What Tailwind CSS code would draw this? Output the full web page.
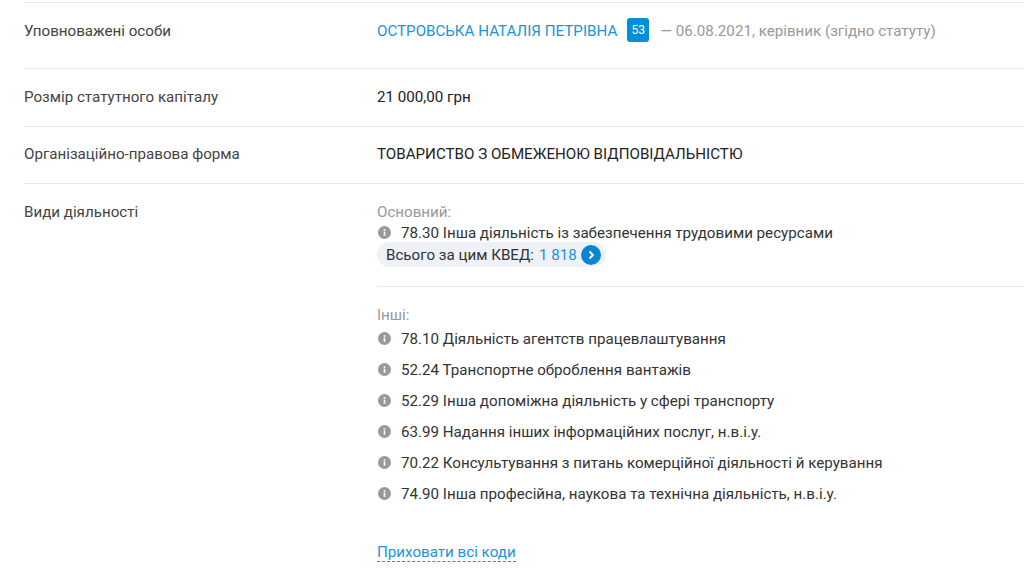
<!doctype html>
<html lang="uk">
<head>
  <meta charset="UTF-8">
  <meta name="viewport" content="width=device-width, initial-scale=1.0">
  <title>Компанія</title>
  <script src="https://cdn.jsdelivr.net/npm/@tailwindcss/browser@4"></script>
</head>
<body class="bg-white text-[#333] font-['Roboto',sans-serif] text-[15.15px] leading-[20px] overflow-hidden h-[574px]">
  <div class="ml-6 pt-[2px]">
    <!-- Уповноважені особи -->
    <div class="flex border-t border-[#e8e8e8] h-[66px] pt-[18px]">
      <div class="w-[353px] text-[#444]">Уповноважені особи</div>
      <div class="flex items-start">
        <a class="text-[#1a94da]">ОСТРОВСЬКА НАТАЛІЯ ПЕТРІВНА</a>
        <span class="ml-[10px] mt-[-3px] w-[22px] h-[24px] bg-[#0090d9] rounded-[3px] text-white text-[12px] flex items-center justify-center">53</span>
        <span class="ml-[11px] text-[#999]">— 06.08.2021, керівник (згідно статуту)</span>
      </div>
    </div>

    <div class="flex border-t border-[#e8e8e8] h-[58px] pt-[18px]">
      <div class="w-[353px] text-[#444]">Розмір статутного капіталу</div>
      <div class="text-[#222]">21 000,00 грн</div>
    </div>

    <div class="flex border-t border-[#e8e8e8] h-[57px] pt-[17px]">
      <div class="w-[353px] text-[#444]">Організаційно-правова форма</div>
      <div class="text-[#222]">ТОВАРИСТВО З ОБМЕЖЕНОЮ ВІДПОВІДАЛЬНІСТЮ</div>
    </div>

    <!-- Види діяльності -->
    <div class="flex border-t border-[#e8e8e8] pt-[18px]">
      <div class="w-[353px] text-[#444]">Види діяльності</div>
      <div class="flex-1">
        <div class="text-[#999] mb-[1px]">Основний:</div>
        <div class="flex items-center h-[20px]">
          <svg class="w-[13px] h-[13px] mr-[10px] ml-[1px] mt-[-2px]" viewBox="0 0 16 16"><circle cx="8" cy="8" r="8" fill="#999"/><rect x="7" y="7" width="2" height="5" fill="#fff"/><rect x="7" y="4" width="2" height="2" fill="#fff"/></svg>
          <span class="text-[#333]">78.30 Інша діяльність із забезпечення трудовими ресурсами</span>
        </div>
        <div class="inline-flex items-center h-[25px] mt-[-1px] pl-[9px] pr-[5px] bg-[#eef1f6] rounded-full">
          <span class="text-[#333]">Всього за цим КВЕД:</span>
          <span class="ml-[5px] text-[#1a94da]">1 818</span>
          <span class="ml-[4px] w-[20px] h-[20px] rounded-full bg-[#0a86d0] flex items-center justify-center">
            <svg class="w-[10px] h-[10px]" viewBox="0 0 10 10" fill="none" stroke="#fff" stroke-width="1.8"><path d="M3.5 1.5 7 5l-3.5 3.5"/></svg>
          </span>
        </div>
        <div class="border-t border-[#e8e8e8] mt-[19px] pt-[18px]">
          <div class="text-[#999]">Інші:</div>
          <ul class="mt-[4px] flex flex-col gap-[11px]">
            <li class="flex items-center h-[20px]"><svg class="w-[13px] h-[13px] mr-[10px] ml-[1px] mt-[-2px]" viewBox="0 0 16 16"><circle cx="8" cy="8" r="8" fill="#999"/><rect x="7" y="7" width="2" height="5" fill="#fff"/><rect x="7" y="4" width="2" height="2" fill="#fff"/></svg>78.10 Діяльність агентств працевлаштування</li>
            <li class="flex items-center h-[20px]"><svg class="w-[13px] h-[13px] mr-[10px] ml-[1px] mt-[-2px]" viewBox="0 0 16 16"><circle cx="8" cy="8" r="8" fill="#999"/><rect x="7" y="7" width="2" height="5" fill="#fff"/><rect x="7" y="4" width="2" height="2" fill="#fff"/></svg>52.24 Транспортне оброблення вантажів</li>
            <li class="flex items-center h-[20px]"><svg class="w-[13px] h-[13px] mr-[10px] ml-[1px] mt-[-2px]" viewBox="0 0 16 16"><circle cx="8" cy="8" r="8" fill="#999"/><rect x="7" y="7" width="2" height="5" fill="#fff"/><rect x="7" y="4" width="2" height="2" fill="#fff"/></svg>52.29 Інша допоміжна діяльність у сфері транспорту</li>
            <li class="flex items-center h-[20px]"><svg class="w-[13px] h-[13px] mr-[10px] ml-[1px] mt-[-2px]" viewBox="0 0 16 16"><circle cx="8" cy="8" r="8" fill="#999"/><rect x="7" y="7" width="2" height="5" fill="#fff"/><rect x="7" y="4" width="2" height="2" fill="#fff"/></svg>63.99 Надання інших інформаційних послуг, н.в.і.у.</li>
            <li class="flex items-center h-[20px]"><svg class="w-[13px] h-[13px] mr-[10px] ml-[1px] mt-[-2px]" viewBox="0 0 16 16"><circle cx="8" cy="8" r="8" fill="#999"/><rect x="7" y="7" width="2" height="5" fill="#fff"/><rect x="7" y="4" width="2" height="2" fill="#fff"/></svg>70.22 Консультування з питань комерційної діяльності й керування</li>
            <li class="flex items-center h-[20px]"><svg class="w-[13px] h-[13px] mr-[10px] ml-[1px] mt-[-2px]" viewBox="0 0 16 16"><circle cx="8" cy="8" r="8" fill="#999"/><rect x="7" y="7" width="2" height="5" fill="#fff"/><rect x="7" y="4" width="2" height="2" fill="#fff"/></svg>74.90 Інша професійна, наукова та технічна діяльність, н.в.і.у.</li>
          </ul>
          <a class="inline-block mt-[39px] text-[#1a94da] border-b border-dashed border-[#1a94da] leading-[18px]">Приховати всі коди</a>
        </div>
      </div>
    </div>
  </div>
</body>
</html>
